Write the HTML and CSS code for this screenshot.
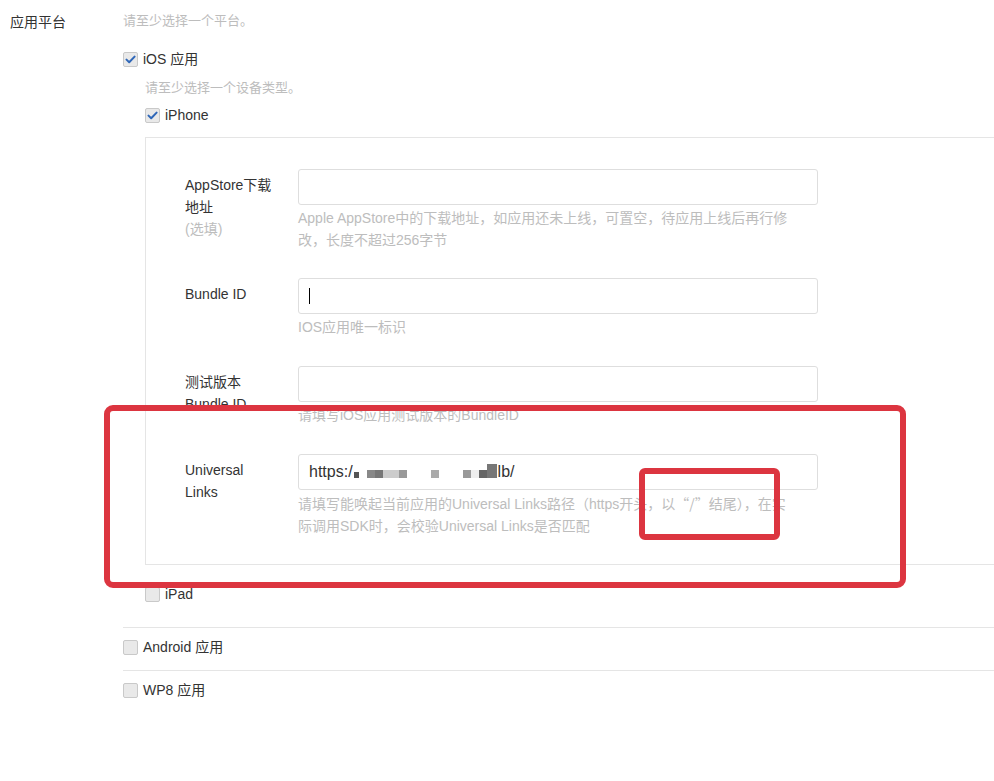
FILE: index.html
```html
<!DOCTYPE html>
<html lang="zh-CN">
<head>
	<meta charset="UTF-8">
	<title>应用平台</title>
	<link rel="stylesheet" href="styles.css">
</head>
<body>

	<div class="form">
		<div class="form-row">
			<div class="form-label">应用平台</div>
			<div class="form-field">
				<p class="tip">请至少选择一个平台。</p>

				<!-- iOS -->
				<div class="platform platform-ios">
					<label class="check">
						<span class="box"><svg width="11" height="9" viewBox="0 0 11 9"><path d="M1.5 4.6 L4.2 7.2 L9.6 1.6" fill="none" stroke="#2f67b8" stroke-width="2" stroke-linecap="round" stroke-linejoin="round"/></svg></span>
						iOS 应用
					</label>
					<div class="devices">
						<p class="tip tip-device">请至少选择一个设备类型。</p>
						<label class="check check-iphone">
							<span class="box"><svg width="11" height="9" viewBox="0 0 11 9"><path d="M1.5 4.6 L4.2 7.2 L9.6 1.6" fill="none" stroke="#2f67b8" stroke-width="2" stroke-linecap="round" stroke-linejoin="round"/></svg></span>
							iPhone
						</label>

						<div class="panel">
							<div class="item">
								<div class="item-label">AppStore下载地址<br><span class="optional">(选填)</span></div>
								<div class="item-field">
									<div class="input"></div>
									<p class="help">Apple AppStore中的下载地址，如应用还未上线，可置空，待应用上线后再行修<br>改，长度不超过256字节</p>
								</div>
							</div>
							<div class="item">
								<div class="item-label">Bundle ID</div>
								<div class="item-field">
									<div class="input"><span class="caret"></span></div>
									<p class="help">IOS应用唯一标识</p>
								</div>
							</div>
							<div class="item">
								<div class="item-label">测试版本 Bundle ID</div>
								<div class="item-field">
									<div class="input"></div>
									<p class="help">请填写iOS应用测试版本的BundleID</p>
								</div>
							</div>
							<div class="item">
								<div class="item-label">Universal Links</div>
								<div class="item-field">
									<div class="input">https:/<span class="blur"><i class="s5 tiny"></i><i class="s8"></i><i class="s7"></i><i class="sc"></i><i class="sc"></i><i class="s9"></i><i class="sa gap2"></i><i class="s9 gap2"></i><i class="se"></i><i class="s6"></i><i class="s7 tall"></i></span>lb/</div>
									<p class="help">请填写能唤起当前应用的Universal Links路径（https开头，以<span class="cjk">“/”</span>结尾），在实<br>际调用SDK时，会校验Universal Links是否匹配</p>
								</div>
							</div>
						</div>

						<label class="check check-ipad">
							<span class="box"></span>
							iPad
						</label>
					</div>
				</div>

				<div class="platform">
					<label class="check"><span class="box"></span>Android 应用</label>
				</div>
				<div class="platform">
					<label class="check"><span class="box"></span>WP8 应用</label>
				</div>
			</div>
		</div>
	</div>

	<!-- 标注框 -->
	<div class="mark mark-big"></div>
	<div class="mark mark-small"></div>

</body>
</html>
```

FILE: styles.css
```css
/* 基础 */
html, body {
	margin: 0;
	padding: 0;
	background-color: #fff;
}
body {
	font-family: "Liberation Sans", "Noto Sans CJK SC", sans-serif;
	font-size: 14px;
	line-height: 22px;
	color: #333;
	position: relative;
	min-height: 781px;
	overflow: hidden;
}
p {
	margin: 0;
}

/* 表单行 */
.form {
	padding-top: 11px;
}
.form-row {
	display: flex;
}
.form-label {
	width: 113px;
	padding-left: 10px;
	flex: none;
}
.form-field {
	flex: 1;
	min-width: 0;
}
.tip {
	color: #bdbdbd;
	font-size: 13px;
	margin-top: -1px;
}

/* 平台 */
.platform {
	padding: 8px 0 12px;
	border-top: 1px solid #e5e5e5;
}
.platform-ios {
	border-top: none;
	padding: 16px 0 22px;
}
.check {
	display: flex;
	align-items: center;
	gap: 5px;
	height: 22px;
}
.box {
	width: 13px;
	height: 13px;
	border: 1px solid #c9c9c9;
	border-radius: 2px;
	background-color: #e9e9e9;
	display: flex;
	align-items: center;
	justify-content: center;
	flex: none;
}

/* 设备 */
.devices {
	padding-left: 22px;
}
.tip-device {
	margin-top: 7px;
}
.check-iphone {
	margin-top: 5px;
}
.check-ipad {
	margin-top: 18px;
}

.panel {
	margin-top: 11px;
	border: 1px solid #e5e5e5;
	border-right: none;
	padding: 31px 0 0 39px;
}
.item {
	display: flex;
	margin-bottom: 28px;
}
.item:first-child {
	margin-bottom: 27px;
}
.item:last-child {
	margin-bottom: 27px;
}
.item-label {
	width: 90px;
	margin-right: 23px;
	padding-top: 5px;
	flex: none;
}
.optional {
	color: #bdbdbd;
}
.item-field {
	width: 520px;
}
.input {
	height: 36px;
	box-sizing: border-box;
	border: 1px solid #dedede;
	border-radius: 3px;
	padding: 0 10px;
	font-size: 16px;
	line-height: 34px;
	display: flex;
	align-items: center;
	white-space: nowrap;
}
.caret {
	width: 1px;
	height: 16px;
	background-color: #000;
}
.help {
	margin-top: 2px;
	color: #bdbdbd;
	width: 510px;
}
.cjk {
	font-family: "Noto Sans CJK SC", sans-serif;
}

/* 打码的链接 */
.blur {
	display: inline-flex;
	align-items: flex-end;
	height: 14px;
	margin: 0 1px 0 1px;
}
.blur i {
	display: block;
	width: 8px;
	height: 8px;
	margin-bottom: 1px;
}
.blur .tiny {
	width: 5px;
	height: 6px;
	margin-right: 8px;
}
.blur .gap2 {
	margin-left: 24px;
}
.blur .tall {
	height: 14px;
	width: 10px;
}
.s5 { background-color: #555; }
.s6 { background-color: #666; }
.s7 { background-color: #777; }
.s8 { background-color: #888; }
.s9 { background-color: #999; }
.sa { background-color: #aaa; }
.sc { background-color: #ccc; }
.se { background-color: #eee; }

/* 红色标注框，盖在页面上 */
.mark {
	position: absolute;
	border: 6px solid #dc3540;
	box-sizing: border-box;
}
.mark-big {
	left: 104px;
	top: 405px;
	width: 802px;
	height: 183px;
	border-radius: 9px;
}
.mark-small {
	left: 639px;
	top: 468px;
	width: 141px;
	height: 72px;
	border-radius: 6px;
}
```
